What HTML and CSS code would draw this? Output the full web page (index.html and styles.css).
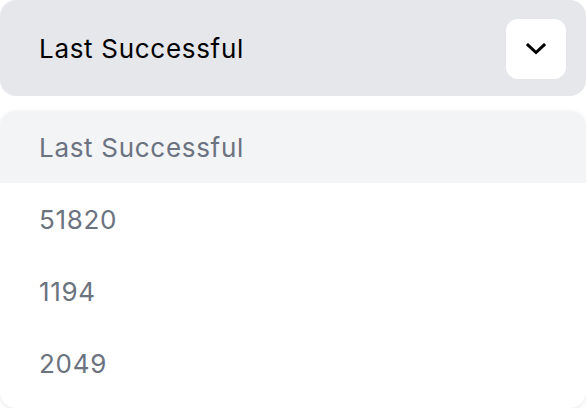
FILE: index.html
```html
<!DOCTYPE html>
<html>
<head>
<meta charset="utf-8">
<link rel="stylesheet" href="styles.css">
</head>
<body>
<div class="select">
  <span class="select-label">Last Successful</span>
  <button class="select-btn" aria-label="Toggle">
    <svg width="20" height="12" viewBox="0 0 20 12"><path d="M2 2 L10 9.5 L18 2" fill="none" stroke="#000" stroke-width="3" stroke-linecap="square"/></svg>
  </button>
</div>
<ul class="menu">
  <li class="item active">Last Successful</li>
  <li class="item">51820</li>
  <li class="item">1194</li>
  <li class="item">2049</li>
</ul>
</body>
</html>
```
FILE: styles.css
```css
html, body { margin: 0; padding: 0; background: #fff; }
body { font-family: Inter, "Noto Sans", sans-serif; width: 586px; height: 408px; overflow: hidden; }
.select {
  height: 96px;
  background: #e5e7eb;
  border-radius: 16px;
  display: flex;
  align-items: center;
  justify-content: space-between;
  padding: 0 20px 0 39px;
  box-sizing: border-box;
}
.select-label { font-size: 26px; color: #000; letter-spacing: 0.7px; }
.select-btn {
  width: 60px; height: 60px;
  border: none; border-radius: 12px;
  background: #fff;
  display: flex; align-items: center; justify-content: center;
  padding: 0; margin-top: 1px;
}
.select-btn svg { display: block; margin-top: 1px; }
.menu {
  list-style: none;
  margin: 15px 0 0;
  padding: 0 0 9px;
  background: #fff;
  border-radius: 16px;
  box-shadow: 0 1px 4px rgba(17, 24, 39, 0.10);
  overflow: hidden;
}
.item {
  height: 72px;
  display: flex; align-items: center;
  padding-left: 39px;
  font-size: 26px;
  letter-spacing: 0.7px;
  color: #6b7280;
}
.item.active { background: #f3f4f6; }
```
